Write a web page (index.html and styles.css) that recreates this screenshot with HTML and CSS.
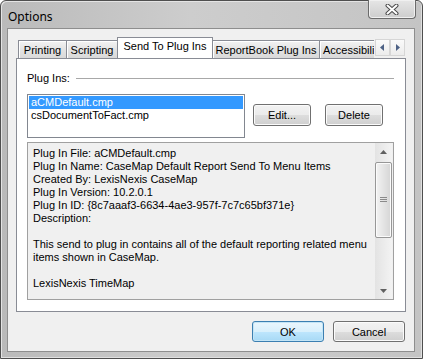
FILE: index.html
```html
<!DOCTYPE html>
<html lang="en">
<head>
<meta charset="UTF-8">
<title>Options</title>
<link rel="stylesheet" href="styles.css">
</head>
<body>
<div class="window">
  <div class="titlebar">
    <span class="title">Options</span>
    <div class="close">
      <svg width="14" height="11" viewBox="0 0 14 11">
        <path d="M2.5 1.5 L11.5 9.5 M11.5 1.5 L2.5 9.5" stroke="#4a4a4a" stroke-width="4" stroke-linecap="round"/>
        <path d="M2.5 1.5 L11.5 9.5 M11.5 1.5 L2.5 9.5" stroke="#fff" stroke-width="2" stroke-linecap="round"/>
      </svg>
    </div>
  </div>

  <div class="client">
    <div class="tabstrip">
      <div class="tab-list">
        <div class="tab tab-printing">Printing</div>
        <div class="tab tab-scripting">Scripting</div>
        <div class="tab tab-send selected">Send To Plug Ins</div>
        <div class="tab tab-report">ReportBook Plug Ins</div>
        <div class="tab tab-access">Accessibili</div>
      </div>
      <div class="spin">
        <span class="spin-btn"><svg width="5" height="7" viewBox="0 0 5 7"><path d="M4 0 L0 3.5 L4 7 Z" fill="#4d6185"/></svg></span>
        <span class="spin-btn"><svg width="5" height="7" viewBox="0 0 5 7"><path d="M1 0 L5 3.5 L1 7 Z" fill="#4d6185"/></svg></span>
      </div>
    </div>

    <div class="panel">
      <div class="group-label">
        <span>Plug Ins:</span>
        <span class="rule"></span>
      </div>

      <div class="list-row">
        <div class="listbox">
          <div class="item selected">aCMDefault.cmp</div>
          <div class="item">csDocumentToFact.cmp</div>
        </div>
        <button class="btn btn-edit">Edit...</button>
        <button class="btn btn-delete">Delete</button>
      </div>

      <div class="details">
        <div class="details-text">
          <div>Plug In File: aCMDefault.cmp</div>
          <div>Plug In Name: CaseMap Default Report Send To Menu Items</div>
          <div>Created By: LexisNexis CaseMap</div>
          <div>Plug In Version: 10.2.0.1</div>
          <div>Plug In ID: {8c7aaaf3-6634-4ae3-957f-7c7c65bf371e}</div>
          <div>Description:</div>
          <div>&nbsp;</div>
          <div>This send to plug in contains all of the default reporting related menu</div>
          <div>items shown in CaseMap.</div>
          <div>&nbsp;</div>
          <div>LexisNexis TimeMap</div>
        </div>
        <div class="scrollbar">
          <div class="arrow"><svg width="7" height="4" viewBox="0 0 7 4"><path d="M0 4 L3.5 0 L7 4 Z" fill="#606060"/></svg></div>
          <div class="track">
            <div class="thumb">
              <svg width="7" height="6" viewBox="0 0 7 6"><path d="M0 0.5 H7 M0 2.5 H7 M0 4.5 H7" stroke="#8a8a8a" stroke-width="1"/></svg>
            </div>
          </div>
          <div class="arrow"><svg width="7" height="4" viewBox="0 0 7 4"><path d="M0 0 L3.5 4 L7 0 Z" fill="#606060"/></svg></div>
        </div>
      </div>
    </div>

    <div class="footer">
      <button class="btn btn-wide default">OK</button>
      <button class="btn btn-wide">Cancel</button>
    </div>
  </div>
</div>
</body>
</html>
```

FILE: styles.css
```css
* {
  box-sizing: border-box;
}

body {
  margin: 0;
  background: #fff;
  font-family: "Liberation Sans", Arial, sans-serif;
  font-size: 11px;
  color: #000;
}

.window {
  width: 423px;
  height: 359px;
  display: flex;
  flex-direction: column;
  padding: 0 7px 6px 6px;
  border: 1px solid #4f4f4f;
  border-radius: 6px 6px 0 0;
  background: linear-gradient(to right, #bababa, #cdcdcd 45%, #c4c4c4);
  box-shadow: inset 1px 1px 0 #e4e4e4, inset -1px -1px 0 #e0e0e0;
}

/* title bar */
.titlebar {
  height: 27px;
  display: flex;
  align-items: flex-start;
}

.title {
  flex: 1;
  padding: 7px 0 0 1px;
  font-family: "Noto Sans", sans-serif;
  font-size: 12px;
  color: #000;
}

.close {
  width: 48px;
  height: 19px;
  margin-top: -1px;
  margin-right: -1px;
  display: flex;
  align-items: center;
  justify-content: center;
  border: 1px solid #6b6b6b;
  border-top: none;
  border-radius: 0 0 4px 4px;
  background: linear-gradient(#e6e6e6, #cdcdcd);
  box-shadow: inset 0 0 0 1px #f0f0f0;
}

/* client area */
.client {
  flex: 1;
  display: flex;
  flex-direction: column;
  padding: 8px 8px 0 8px;
  border: 1px solid #8e8e8e;
  background: #f0f0f0;
}

.tabstrip {
  height: 21px;
  display: flex;
  align-items: flex-end;
  padding-left: 2px;
}

.tab-list {
  width: 356px;
  height: 21px;
  display: flex;
  align-items: flex-end;
  overflow: hidden;
}

.tab {
  height: 18px;
  flex-shrink: 0;
  padding-top: 2px;
  margin-right: -1px;
  border: 1px solid #898c95;
  border-bottom: none;
  background: linear-gradient(#f3f3f3, #e3e3e3 50%, #d9d9d9);
  box-shadow: inset 1px 1px 0 #fff;
  line-height: 14px;
  text-align: center;
  white-space: nowrap;
}

.tab.selected {
  position: relative;
  z-index: 1;
  height: 22px;
  margin-bottom: -1px;
  padding-top: 1px;
  background: #fff;
  box-shadow: none;
}

.tab-printing { width: 49px; }
.tab-scripting { width: 52px; }
.tab-send { width: 96px; }
.tab-report { width: 108px; }
.tab-access { width: 60px; padding-left: 3px; text-align: left; }

.spin {
  display: flex;
  margin-bottom: 2px;
  margin-left: 1px;
}

.spin-btn {
  width: 15px;
  height: 17px;
  display: flex;
  align-items: center;
  justify-content: center;
  border: 1px solid #d6d6d6;
  background: linear-gradient(#fafafa, #ececec);
}

.panel {
  height: 254px;
  padding: 13px 11px 11px 10px;
  border: 1px solid #898c95;
  background: #fff;
}

.group-label {
  height: 13px;
  display: flex;
  align-items: center;
  gap: 6px;
  line-height: 13px;
}

.rule {
  flex: 1;
  height: 1px;
  background: #a8a8a8;
}

.list-row {
  display: flex;
  align-items: flex-start;
  margin-top: 9px;
}

.listbox {
  width: 218px;
  height: 44px;
  padding: 1px;
  border: 1px solid #828790;
  background: #fff;
}

.item {
  height: 13px;
  padding-left: 2px;
  line-height: 13px;
}

.item.selected {
  background: #3399ff;
  color: #fff;
}

.btn {
  height: 22px;
  padding: 0;
  border: 1px solid #707070;
  border-radius: 3px;
  background: linear-gradient(#f2f2f2, #ebebeb 50%, #dddddd 51%, #cfcfcf);
  box-shadow: inset 0 0 0 1px #fbfbfb;
  font-family: "Liberation Sans", Arial, sans-serif;
  font-size: 11px;
  color: #000;
}

.btn-edit {
  width: 58px;
  margin: 10px 0 0 8px;
}

.btn-delete {
  width: 58px;
  margin: 10px 0 0 14px;
}

.details {
  height: 158px;
  margin-top: 4px;
  display: flex;
  border: 1px solid #a0a0a0;
  background: #f0f0f0;
}

.details-text {
  flex: 1;
  padding: 4px 0 0 5px;
  line-height: 13px;
  white-space: nowrap;
  overflow: hidden;
}

.scrollbar {
  width: 17px;
  margin-right: 1px;
  display: flex;
  flex-direction: column;
  background: linear-gradient(to right, #e3e3e3, #f3f3f3);
}

.arrow {
  height: 17px;
  display: flex;
  align-items: center;
  justify-content: center;
}

.track {
  flex: 1;
  padding-top: 2px;
}

.thumb {
  height: 76px;
  display: flex;
  align-items: center;
  justify-content: center;
  border: 1px solid #979797;
  border-radius: 2px;
  background: linear-gradient(to right, #f3f3f3, #e4e4e4 50%, #d5d5d5);
  box-shadow: inset 0 0 0 1px #fbfbfb;
}

/* dialog buttons */
.footer {
  display: flex;
  justify-content: flex-end;
  gap: 9px;
  padding: 9px 1px 0 0;
}

.btn-wide {
  width: 72px;
  height: 21px;
}

.btn.default {
  border-color: #3c7fb1;
  background: linear-gradient(#eaf6fd, #d9f0fc 50%, #bee6fd 51%, #a7d9f5);
  box-shadow: inset 0 0 0 1px #c4e5f6;
}
```
